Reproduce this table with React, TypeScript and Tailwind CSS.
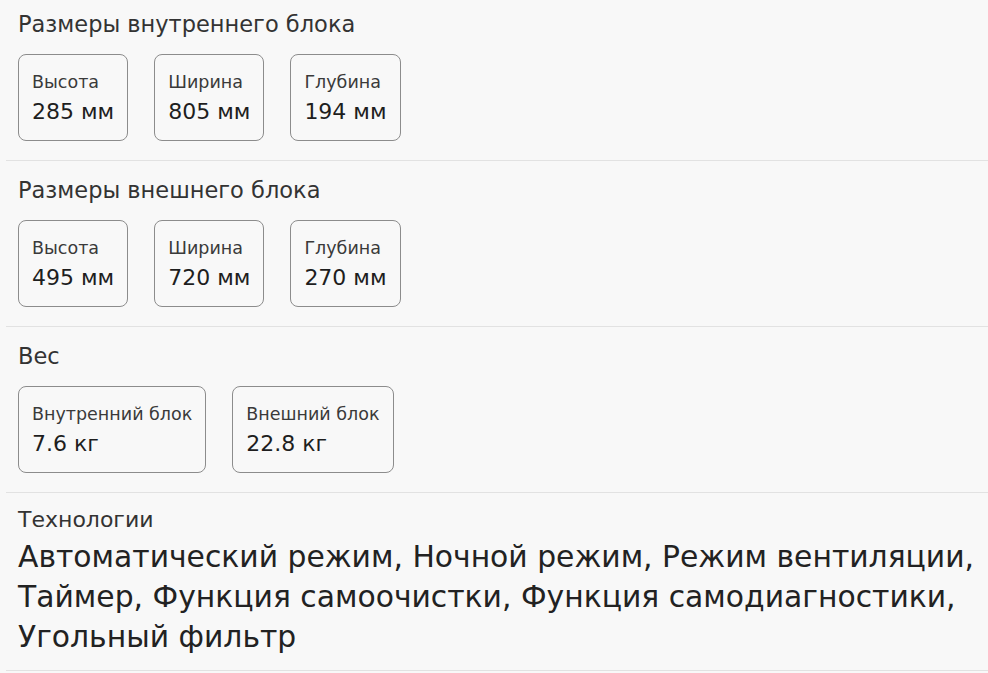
import React from 'react';

interface Spec {
  label: string;
  value: string;
}

interface Group {
  title: string;
  items: Spec[];
}

const groups: Group[] = [
  {
    title: 'Размеры внутреннего блока',
    items: [
      { label: 'Высота', value: '285 мм' },
      { label: 'Ширина', value: '805 мм' },
      { label: 'Глубина', value: '194 мм' },
    ],
  },
  {
    title: 'Размеры внешнего блока',
    items: [
      { label: 'Высота', value: '495 мм' },
      { label: 'Ширина', value: '720 мм' },
      { label: 'Глубина', value: '270 мм' },
    ],
  },
  {
    title: 'Вес',
    items: [
      { label: 'Внутренний блок', value: '7.6 кг' },
      { label: 'Внешний блок', value: '22.8 кг' },
    ],
  },
];

const SpecCard: React.FC<Spec> = ({ label, value }) => (
  <div className="rounded-lg border border-[#8c8c8c] px-[13px] pt-[16px] pb-[14px]">
    <div className="text-[17.5px] leading-[22px] text-[#3a3a3a]">{label}</div>
    <div className="mt-[5px] text-[22px] leading-[28px] text-[#1e1e1e]">{value}</div>
  </div>
);

export default function App() {
  return (
    <div
      className="min-h-screen bg-[#f8f8f8] pl-[6px]"
      style={{ fontFamily: '"DejaVu Sans", sans-serif' }}
    >
      {groups.map((g, i) => (
        <section
          key={g.title}
          className={`border-b border-[#e2e2e2] pl-[12px] pb-[19px] ${i === 0 ? 'pt-[11px]' : 'pt-[16px]'}`}
        >
          <h3 className="text-[22.5px] leading-[26px] text-[#333]">{g.title}</h3>
          <div className="mt-[17px] flex gap-[26px]">
            {g.items.map((it) => (
              <SpecCard key={it.label} {...it} />
            ))}
          </div>
        </section>
      ))}
      <section className="border-b border-[#e2e2e2] pl-[12px] pt-[14px] pb-[13px]">
        <h3 className="text-[22px] leading-[26px] text-[#333]">Технологии</h3>
        <p className="mt-[4px] text-[29.8px] leading-[40px] text-[#222]">
          Автоматический режим, Ночной режим, Режим вентиляции, Таймер, Функция самоочистки,
          Функция самодиагностики, Угольный фильтр
        </p>
      </section>
    </div>
  );
}
